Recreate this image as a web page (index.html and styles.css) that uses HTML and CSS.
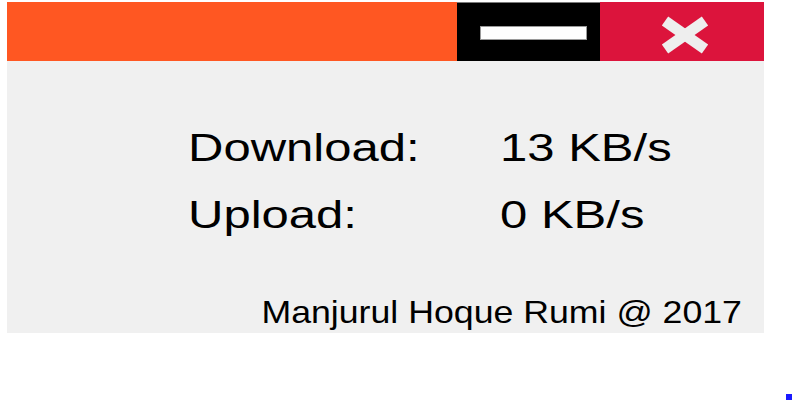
FILE: index.html
```html
<!DOCTYPE html>
<html>
<head>
<meta charset="utf-8">
<link rel="stylesheet" href="styles.css">
</head>
<body>
<div class="window">
  <div class="titlebar">
    <div class="title-fill"></div>
    <div class="btn-min"><span class="min-bar"></span></div>
    <div class="btn-close">
      <svg class="close-x" width="50" height="38" viewBox="0 0 50 38">
        <line x1="5" y1="5" x2="45" y2="33" stroke="#eeeeee" stroke-width="11"/>
        <line x1="45" y1="5" x2="5" y2="33" stroke="#eeeeee" stroke-width="11"/>
      </svg>
    </div>
  </div>
  <div class="body">
    <div class="stats">
      <span class="big">Download:</span><span class="big">13 KB/s</span>
      <span class="big">Upload:</span><span class="big">0 KB/s</span>
    </div>
    <div class="footer"><span class="credit">Manjurul Hoque Rumi @ 2017</span></div>
  </div>
</div>
<span class="dot"></span>
</body>
</html>
```
FILE: styles.css
```css
html, body {
  margin: 0;
  padding: 0;
  background: #ffffff;
  font-family: "Liberation Sans", Arial, sans-serif;
  color: #000;
}
body {
  position: relative;
  height: 400px;
  overflow: hidden;
}
.window {
  margin: 2px 0 0 7px;
  width: 757px;
  height: 331px;
  display: flex;
  flex-direction: column;
  background: #f0f0f0;
}
.titlebar {
  height: 59px;
  display: flex;
  box-shadow: inset 0 1px 0 rgba(255,255,255,0.45);
}
.title-fill {
  flex: 1;
  background: #ff5722;
}
.btn-min {
  width: 143px;
  background: #000;
  display: flex;
  align-items: flex-start;
  padding-left: 23px;
  box-sizing: border-box;
  border-top: 1px solid #7a7a7a;
}
.min-bar {
  margin-top: 23px;
  width: 105px;
  height: 12px;
  background: #fff;
  border: 1px solid #9a9a9a;
}
.btn-close {
  width: 164px;
  background: #dc143c;
  display: flex;
  align-items: flex-start;
  padding-left: 60px;
  box-sizing: border-box;
}
.close-x {
  margin-top: 14px;
  display: block;
}
.body {
  flex: 1;
  display: flex;
  flex-direction: column;
}
.stats {
  margin-top: 54px;
  padding-left: 181px;
  display: grid;
  grid-template-columns: 312px 200px;
  grid-auto-rows: 67px;
  font-size: 38px;
  line-height: 67px;
}
.big {
  display: inline-block;
  transform: scaleX(1.29);
  transform-origin: left center;
  white-space: nowrap;
}
.footer {
  margin-top: auto;
  display: flex;
  justify-content: flex-end;
  padding-right: 22px;
  font-size: 32px;
  line-height: 40px;
  height: 40px;
  margin-bottom: 1px;
}
.credit {
  display: inline-block;
  transform: scaleX(1.115);
  transform-origin: right center;
  white-space: nowrap;
}
.dot {
  position: absolute;
  left: 786px;
  top: 394px;
  width: 6px;
  height: 6px;
  background: #1a1aff;
}
```
